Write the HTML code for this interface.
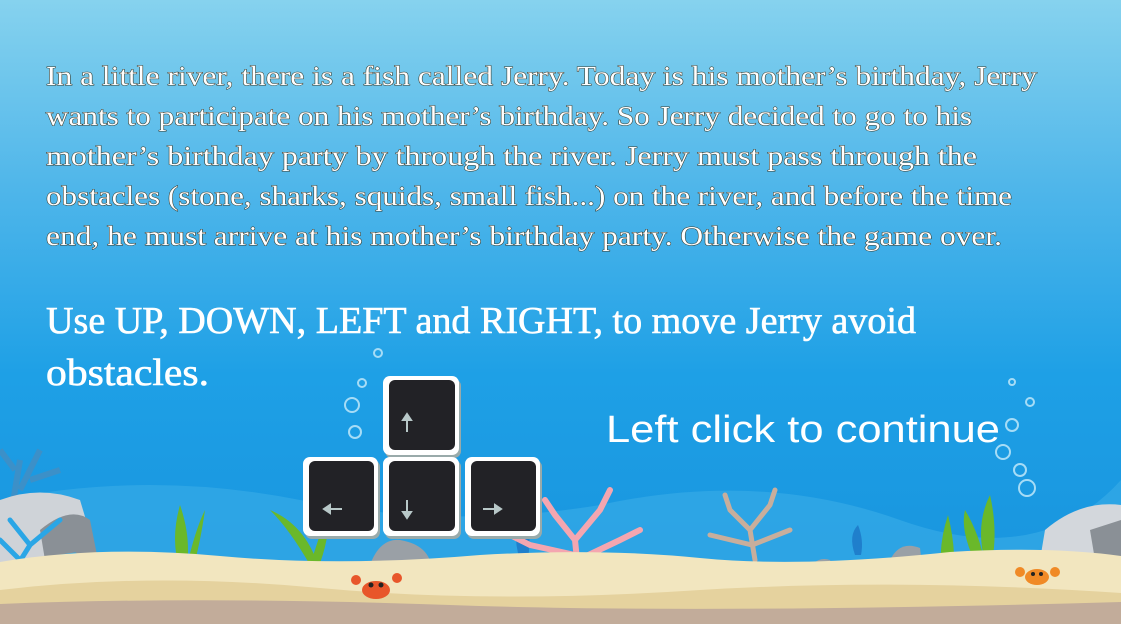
<!DOCTYPE html>
<html><head><meta charset="utf-8"><style>
html,body{margin:0;padding:0;width:1121px;height:624px;overflow:hidden}
svg{display:block}
</style></head><body>
<svg width="1121" height="624" viewBox="0 0 1121 624" xmlns="http://www.w3.org/2000/svg">
<defs>
<linearGradient id="bg" x1="0" y1="0" x2="0" y2="1">
<stop offset="0" stop-color="#86d2ee"/>
<stop offset="0.3" stop-color="#4fb6ea"/>
<stop offset="0.6" stop-color="#1ea0e6"/>
<stop offset="1" stop-color="#1792dc"/>
</linearGradient>
</defs>
<rect width="1121" height="624" fill="url(#bg)"/>
<path d="M0 500 Q150 470 300 500 T600 505 Q760 470 900 520 T1121 480 L1121 624 L0 624Z" fill="#3aaee8" opacity="0.6"/>
<path d="M10 520 L20 460 M20 490 L40 450 M30 480 L60 470 M15 470 L0 450" stroke="#3c90c8" stroke-width="6" fill="none"/>
<g fill="none" stroke="#a6dcf6" stroke-width="2">
<circle cx="352" cy="405" r="7"/><circle cx="362" cy="383" r="4"/><circle cx="355" cy="432" r="6"/><circle cx="378" cy="353" r="4"/>
<circle cx="1012" cy="425" r="6"/><circle cx="1003" cy="452" r="7"/><circle cx="1020" cy="470" r="6"/><circle cx="1027" cy="488" r="8"/><circle cx="1012" cy="382" r="3"/><circle cx="1030" cy="402" r="4"/>
</g>
<path d="M0 500 Q40 485 80 500 L98 560 L0 565Z" fill="#cfd3d8"/>
<path d="M40 530 Q70 505 90 520 L98 560 L45 560Z" fill="#8a9096"/>
<path d="M1045 530 Q1080 500 1121 505 L1121 560 L1040 560Z" fill="#d3d7dc"/>
<path d="M1090 530 L1121 520 L1121 560 L1095 560Z" fill="#8a9096"/>
<path d="M370 565 Q380 538 400 540 Q430 545 432 570Z" fill="#9aa0a6"/>
<path d="M245 590 Q255 570 270 575 L280 592Z" fill="#9aa0a6"/>
<path d="M805 575 Q815 555 830 560 L838 578Z" fill="#9aa0a6"/>
<path d="M890 560 Q900 540 920 548 L922 565Z" fill="#9aa0a6"/>
<g stroke="#2aa6e6" stroke-width="5" fill="none" stroke-linecap="round"><path d="M5 585 L30 545 L60 520 M30 545 L10 520 M40 560 L75 555 M20 560 L0 540"/></g>
<g fill="#6ab82a">
<path d="M180 570 Q170 540 180 505 Q192 540 186 570Z"/><path d="M186 570 Q195 530 205 510 Q200 545 192 572Z"/>
<path d="M310 565 Q290 530 270 510 Q305 525 318 565Z"/><path d="M310 565 Q325 520 330 500 Q330 540 318 568Z"/>
<path d="M945 590 Q935 555 948 515 Q958 555 952 590Z"/><path d="M985 562 Q975 525 990 495 Q998 530 992 562Z"/><path d="M975 562 Q960 530 965 510 Q980 535 985 565Z"/>
</g>
<g fill="#1f7fcc"><path d="M520 560 Q510 530 525 510 Q532 530 528 560Z"/><path d="M855 555 Q848 535 858 525 Q864 540 861 555Z"/></g>
<g stroke="#f4a6b0" stroke-width="6" fill="none" stroke-linecap="round">
<path d="M580 590 L575 540 L555 515 M575 540 L600 510 M575 555 L530 545 M578 560 L620 540 L640 530 M600 510 L610 490 M555 515 L545 500 M530 545 L510 535"/>
</g>
<g stroke="#c8ae9c" stroke-width="5" fill="none" stroke-linecap="round">
<path d="M755 560 L750 530 L730 510 M750 530 L770 505 M752 545 L710 535 M752 545 L790 530 M770 505 L775 490 M730 510 L725 495"/>
</g>
<path d="M0 562 Q100 545 220 556 T480 555 Q600 548 700 558 T950 552 Q1050 546 1121 556 L1121 624 L0 624Z" fill="#f2e6bf"/>
<path d="M0 590 Q150 572 320 588 T700 590 Q900 578 1121 593 L1121 624 L0 624Z" fill="#e5d29e"/>
<path d="M0 604 Q200 596 450 605 T1121 602 L1121 624 L0 624Z" fill="#c2ac9a"/>
<g fill="#e8562a"><ellipse cx="376" cy="590" rx="14" ry="9"/><circle cx="356" cy="580" r="5"/><circle cx="397" cy="578" r="5"/></g>
<g fill="#222"><circle cx="371" cy="585" r="2.5"/><circle cx="381" cy="585" r="2.5"/></g>
<g fill="#f08a26"><ellipse cx="1037" cy="577" rx="12" ry="8"/><circle cx="1020" cy="572" r="5"/><circle cx="1055" cy="572" r="5"/></g>
<g fill="#222"><circle cx="1033" cy="574" r="2"/><circle cx="1041" cy="574" r="2"/></g>
<g>
<rect x="385" y="379" width="76" height="79" rx="7" fill="#9aa"/>
<rect x="305" y="460" width="75" height="79" rx="7" fill="#9aa"/>
<rect x="385" y="460" width="76" height="79" rx="7" fill="#9aa"/>
<rect x="467" y="460" width="75" height="79" rx="7" fill="#9aa"/>
<rect x="383" y="376" width="76" height="79" rx="7" fill="#fff"/><rect x="389" y="380" width="66" height="70" rx="6" fill="#222226"/>
<rect x="303" y="457" width="75" height="79" rx="7" fill="#fff"/><rect x="309" y="461" width="65" height="70" rx="6" fill="#222226"/>
<rect x="383" y="457" width="76" height="79" rx="7" fill="#fff"/><rect x="389" y="461" width="66" height="70" rx="6" fill="#222226"/>
<rect x="465" y="457" width="75" height="79" rx="7" fill="#fff"/><rect x="471" y="461" width="65" height="70" rx="6" fill="#222226"/>
<g stroke="#b8c8c8" stroke-width="2" fill="#b8c8c8">
<path d="M407 432 L407 418"/><path d="M403 420 L407 414 L411 420Z"/>
<path d="M407 500 L407 514"/><path d="M403 512 L407 518 L411 512Z"/>
<path d="M342 509 L328 509"/><path d="M330 505 L324 509 L330 513Z"/>
<path d="M483 509 L497 509"/><path d="M495 505 L501 509 L495 513Z"/>
</g>
</g>
<g font-family="Liberation Serif, serif" font-size="27" fill="#fff" stroke="#3a3a2a" stroke-width="1" paint-order="stroke">
<text x="46" y="85" textLength="991" lengthAdjust="spacingAndGlyphs">In a little river, there is a fish called Jerry. Today is his mother’s birthday, Jerry</text>
<text x="46" y="125" textLength="926" lengthAdjust="spacingAndGlyphs">wants to participate on his mother’s birthday. So Jerry decided to go to his</text>
<text x="46" y="165" textLength="931" lengthAdjust="spacingAndGlyphs">mother’s birthday party by through the river. Jerry must pass through the</text>
<text x="46" y="205" textLength="966" lengthAdjust="spacingAndGlyphs">obstacles (stone, sharks, squids, small fish...) on the river, and before the time</text>
<text x="46" y="245" textLength="956" lengthAdjust="spacingAndGlyphs">end, he must arrive at his mother’s birthday party. Otherwise the game over.</text>
</g>
<g font-family="Liberation Serif, serif" font-size="38" fill="#fff" stroke="#fff" stroke-width="0.6">
<text x="46" y="333" textLength="870" lengthAdjust="spacingAndGlyphs">Use UP, DOWN, LEFT and RIGHT, to move Jerry avoid</text>
<text x="46" y="385" textLength="163" lengthAdjust="spacingAndGlyphs">obstacles.</text>
</g>
<text x="606" y="442" font-family="Liberation Sans, sans-serif" font-size="38" fill="#fff" textLength="394" lengthAdjust="spacingAndGlyphs">Left click to continue</text>
</svg>
</body></html>
